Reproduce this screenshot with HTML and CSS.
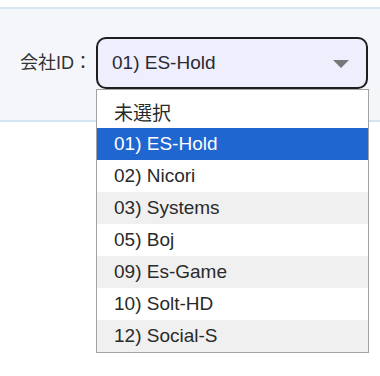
FILE: index.html
```html
<!DOCTYPE html>
<html lang="ja">
<head>
<meta charset="utf-8">
<link rel="stylesheet" href="styles.css">
</head>
<body>
<div class="panel">
  <div class="field">
    <span class="label">会社ID：</span>
    <div class="select-wrap">
      <div class="select">
        <span class="value">01) ES-Hold</span>
        <span class="arrow"></span>
      </div>
      <ul class="options">
        <li class="opt">未選択</li>
        <li class="opt selected">01) ES-Hold</li>
        <li class="opt">02) Nicori</li>
        <li class="opt alt">03) Systems</li>
        <li class="opt">05) Boj</li>
        <li class="opt alt">09) Es-Game</li>
        <li class="opt">10) Solt-HD</li>
        <li class="opt alt">12) Social-S</li>
      </ul>
    </div>
  </div>
</div>
</body>
</html>
```
FILE: styles.css
```css
html, body {
  margin: 0;
  padding: 0;
  background: #ffffff;
}
body {
  min-height: 376px;
  font-family: "Liberation Sans", Arial, "Noto Sans CJK JP", sans-serif;
  color: #333333;
}
.panel {
  margin-top: 7px;
  border-top: 2px solid #d6e7f6;
  border-bottom: 2px solid #d2e5f4;
  background: #f5f6fa;
  height: 111px;
}
.field {
  display: flex;
  align-items: center;
  padding-top: 28px;
}
.label {
  width: 76px;
  padding-left: 20px;
  font-size: 18px;
  line-height: 52px;
  color: #333333;
  font-family: "Liberation Sans", "Noto Sans CJK JP", sans-serif;
  white-space: nowrap;
}
.select-wrap {
  position: relative;
  z-index: 1;
}
.select {
  width: 272px;
  height: 52px;
  box-sizing: border-box;
  border: 2px solid #1e1e1e;
  border-radius: 10px;
  background: #eeeefc;
  display: flex;
  align-items: center;
  justify-content: space-between;
  padding: 0 17px 0 14px;
}
.value {
  font-size: 19px;
  color: #2a2a35;
}
.arrow {
  width: 0;
  height: 0;
  border-left: 8px solid transparent;
  border-right: 8px solid transparent;
  border-top: 8px solid #777777;
  margin-top: 2px;
}
.options {
  position: absolute;
  left: 0;
  top: 52px;
  width: 273px;
  box-sizing: border-box;
  margin: 0;
  padding: 6px 0 0 0;
  list-style: none;
  background: #ffffff;
  border: 1px solid #a3a3a3;
}
.opt {
  height: 32px;
  line-height: 32px;
  padding-left: 17px;
  font-size: 19px;
  color: #2a2a2a;
  white-space: nowrap;
}
.opt:first-child {
  font-family: "Noto Sans CJK JP", "Liberation Sans", sans-serif;
  font-size: 19px;
}
.opt.alt {
  background: #f0f0f0;
}
.opt.selected {
  background: #1f66d0;
  color: #ffffff;
}
```
